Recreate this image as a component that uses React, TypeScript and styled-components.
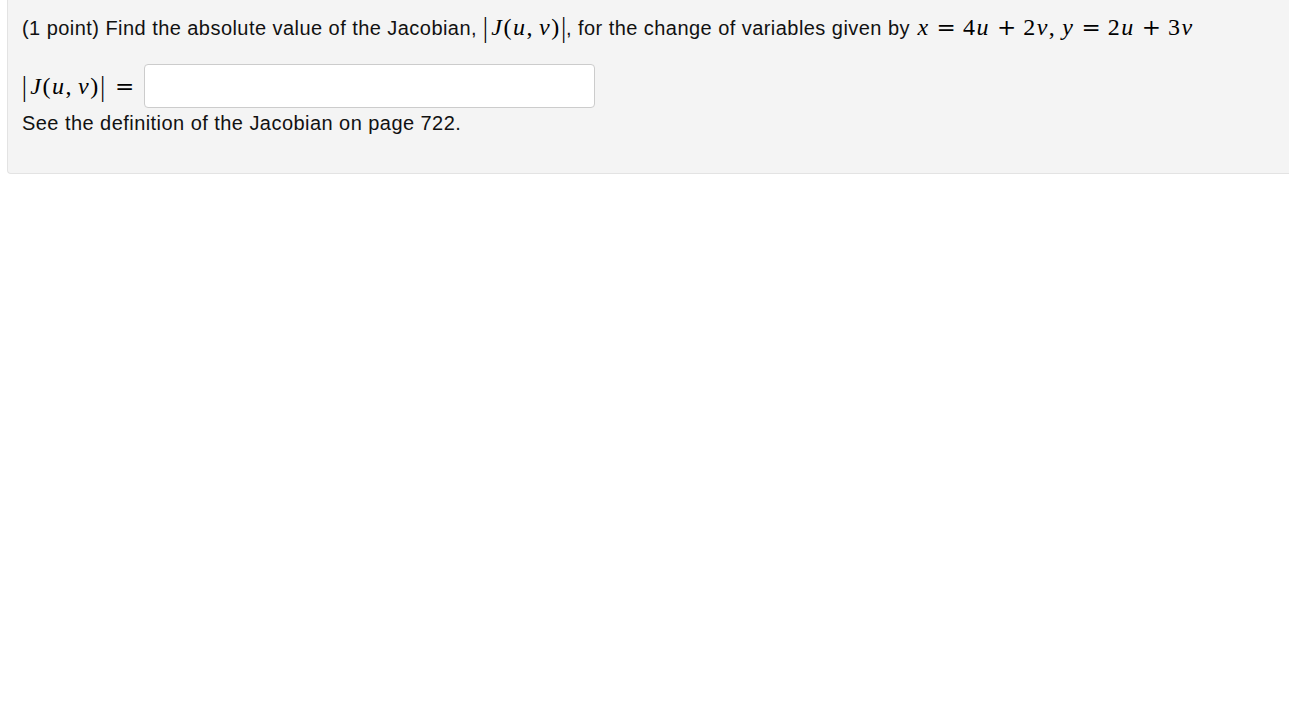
import React from 'react'
import styled, { createGlobalStyle } from 'styled-components'

const GlobalStyle = createGlobalStyle`
  html, body {
    margin: 0;
    padding: 0;
    background: #ffffff;
  }
  body {
    font-family: 'Liberation Sans', Arial, sans-serif;
    color: #111;
  }
`

const Panel = styled.div`
  margin-left: 7px;
  background: #f4f4f4;
  border: 1px solid #e3e3e3;
  border-top: none;
  border-right: none;
  border-radius: 0 0 0 4px;
  padding: 13px 14px 0 14px;
  box-sizing: border-box;
  height: 174px;
`

const Line = styled.div`
  font-size: 20px;
  letter-spacing: 0.45px;
  line-height: 28px;
  white-space: nowrap;
`

const Math = styled.span`
  font-family: 'Liberation Serif', 'Times New Roman', serif;
  font-size: 24px;
  letter-spacing: 0;
  white-space: nowrap;
  color: #000;
`

const V = styled.i`
  font-style: italic;
  padding: 0 1.5px;
`

const Op = styled.span<{ $gap: number }>`
  font-family: 'DejaVu Serif', serif;
  font-size: 23px;
  margin: 0 ${({ $gap }) => $gap}px;
`

const Space = styled.span<{ $w: number }>`
  display: inline-block;
  width: ${({ $w }) => $w}px;
`

const Bar = styled.span<{ $side: 'left' | 'right' }>`
  display: inline-block;
  font-style: normal;
  transform: scaleY(1.2);
  ${({ $side }) => ($side === 'left' ? 'margin-right: 2px;' : 'margin-left: 2px;')}
`

const AnswerRow = styled.div`
  display: flex;
  align-items: center;
  margin-top: 22px;
  height: 44px;
`

const AnswerInput = styled.input`
  width: 451px;
  height: 44px;
  box-sizing: border-box;
  border: 1px solid #cccccc;
  border-radius: 4px;
  background: #fff;
  font-size: 18px;
  padding: 4px 8px;
  outline: none;
`

const Hint = styled(Line)`
  margin-top: 1px;
`

const Jacobian = () => (
  <Math>
    <Bar $side="left">|</Bar>
    <V>J</V>(<V>u</V>,<Space $w={5} />
    <V>v</V>)<Bar $side="right">|</Bar>
  </Math>
)

export default function App() {
  return (
    <>
      <GlobalStyle />
      <Panel>
        <Line>
          (1 point) Find the absolute value of the Jacobian, <Jacobian />, for the change of variables given by{' '}
          <Math>
            <V>x</V>
            <Op $gap={7}>=</Op>4<V>u</V>
            <Op $gap={7}>+</Op>2<V>v</V>,<Space $w={6} />
            <V>y</V>
            <Op $gap={7}>=</Op>2<V>u</V>
            <Op $gap={7}>+</Op>3<V>v</V>
          </Math>
        </Line>
        <AnswerRow>
          <Jacobian />
          <Math>
            <Op $gap={10}>=</Op>
          </Math>
          <AnswerInput type="text" aria-label="answer" />
        </AnswerRow>
        <Hint>See the definition of the Jacobian on page 722.</Hint>
      </Panel>
    </>
  )
}
